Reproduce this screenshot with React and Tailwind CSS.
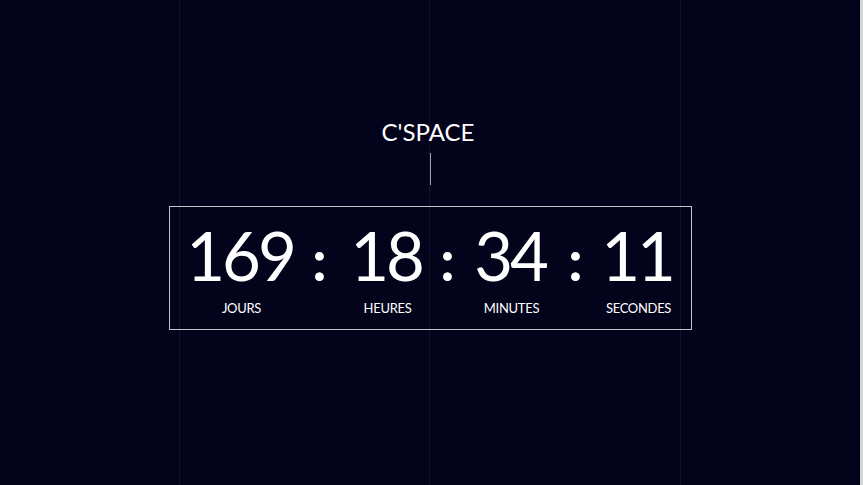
import React from 'react';

const units = [
  { value: '169', label: 'JOURS', w: 'w-[104px]' },
  { value: '18', label: 'HEURES', w: 'w-[84px]' },
  { value: '34', label: 'MINUTES', w: 'w-[92px]' },
  { value: '11', label: 'SECONDES', w: 'w-[90px]' },
];

const colonWidths = ['w-[52px]', 'w-[36px]', 'w-[36px]'];

const Colon = ({ w }) => (
  <div className={`${w} flex justify-center text-[58px] font-bold leading-[60px] pt-[4px]`}>:</div>
);

const App = () => {
  return (
    <div className="h-[485px] w-[863px] flex bg-[#03031b] overflow-hidden" style={{ fontFamily: 'Lato, "Open Sans", sans-serif' }}>
      <div className="grid flex-1">
        {/* faint background column lines */}
        <div className="[grid-area:1/1] flex">
          <div className="w-[180px] border-r border-[#121228]" />
          <div className="w-[250px] border-r border-[#121228]" />
          <div className="w-[251px] border-r border-[#121228]" />
          <div className="flex-1" />
        </div>

        <div className="[grid-area:1/1] flex flex-col items-center pt-[117px] text-white">
          <h1 className="text-[24px] leading-[30px] ml-[-4px]">C'SPACE</h1>
          <div className="mt-[6px] h-[32px] w-px bg-[#9a9ab0]" />
          <div className="mt-[21px] w-[523px] h-[124px] border border-[#c4c4cc] flex pl-[20px] pt-[18px]">
            {units.map((u, i) => (
              <React.Fragment key={u.label}>
                <div className={`${u.w} flex flex-col items-center`}>
                  <div className="text-[67px] leading-[60px] tracking-[-3px] pr-[3px]">{u.value}</div>
                  <div className="mt-[15px] text-[13px] leading-[16px] tracking-[-0.3px]">{u.label}</div>
                </div>
                {i < 3 && <Colon w={colonWidths[i]} />}
              </React.Fragment>
            ))}
          </div>
        </div>
      </div>
      <div className="w-[3px] bg-[#d4d4d8]" />
    </div>
  );
};

export default App;
